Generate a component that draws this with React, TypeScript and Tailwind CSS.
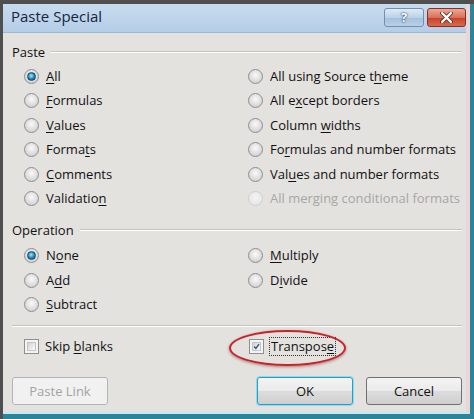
import React from "react";

type Label = [string, string, string];

const pasteLeft: { label: Label; checked?: boolean }[] = [
  { label: ["", "A", "ll"], checked: true },
  { label: ["", "F", "ormulas"] },
  { label: ["", "V", "alues"] },
  { label: ["Forma", "t", "s"] },
  { label: ["", "C", "omments"] },
  { label: ["Validatio", "n", ""] },
];

const pasteRight: { label: Label; disabled?: boolean }[] = [
  { label: ["All using Source t", "h", "eme"] },
  { label: ["All e", "x", "cept borders"] },
  { label: ["Column ", "w", "idths"] },
  { label: ["Fo", "r", "mulas and number formats"] },
  { label: ["Val", "u", "es and number formats"] },
  { label: ["All merging conditional formats", "", ""], disabled: true },
];

const opLeft: { label: Label; checked?: boolean }[] = [
  { label: ["N", "o", "ne"], checked: true },
  { label: ["A", "d", "d"] },
  { label: ["", "S", "ubtract"] },
];

const opRight: { label: Label }[] = [
  { label: ["", "M", "ultiply"] },
  { label: ["D", "i", "vide"] },
];

function Text({ label }: { label: Label }) {
  return (
    <span>
      {label[0]}
      {label[1] && <span className="underline underline-offset-2">{label[1]}</span>}
      {label[2]}
    </span>
  );
}

function Radio({ checked, disabled }: { checked?: boolean; disabled?: boolean }) {
  return (
    <span
      className={`w-[15px] h-[15px] rounded-full border flex items-center justify-center shrink-0 ${
        disabled
          ? "border-[#cfcfcf] bg-[radial-gradient(circle_at_50%_40%,#f4f4f4,#e2e2e2)]"
          : "border-[#8e8f8f] bg-[radial-gradient(circle_at_50%_40%,#fafafa,#c6c6c6)]"
      }`}
    >
      {checked && (
        <span className="w-[9px] h-[9px] rounded-full border border-[#124a70] bg-[radial-gradient(circle_at_45%_40%,#a8e6fa,#1f86b8_55%,#0b3d62)]" />
      )}
    </span>
  );
}

function RadioRow({ label, checked, disabled }: { label: Label; checked?: boolean; disabled?: boolean }) {
  return (
    <div className={`h-[24.5px] flex items-center gap-[7px] ${disabled ? "text-[#a6a6a6]" : "text-[#111]"}`}>
      <Radio checked={checked} disabled={disabled} />
      <Text label={label} />
    </div>
  );
}

function Checkbox({ checked }: { checked?: boolean }) {
  return (
    <span className="w-[15px] h-[15px] border border-[#8f8f8f] bg-[#f4f4f4] p-[2px] shrink-0">
      <span className="block w-full h-full border border-[#c4c4c4] bg-[linear-gradient(135deg,#d3d3d3,#fbfbfb)]">
        {checked && (
          <svg viewBox="0 0 9 9" className="w-full h-full">
            <path d="M1.5 4.5 L3.7 7 L7.8 1.4" fill="none" stroke="#2b4f86" strokeWidth="1.7" />
          </svg>
        )}
      </span>
    </span>
  );
}

function GroupHeader({ title }: { title: string }) {
  return (
    <div className="h-[16px] flex items-center gap-[6px]">
      <span className="text-[#111]">{title}</span>
      <div className="flex-1 border-t border-b border-t-[#c6c3bf] border-b-white" />
    </div>
  );
}

const btn =
  "h-[28px] w-[96px] rounded-[3px] border flex items-center justify-center bg-[linear-gradient(#f3f3f3,#ebebeb_48%,#dcdcdc_52%,#cfcfcf)]";

export default function App() {
  return (
    <div
      className="w-[474px] h-[419px] bg-[#4f4f4f] pt-[4px] pl-[3px] flex flex-col text-[13px] leading-none"
      style={{ fontFamily: '"Open Sans", "Liberation Sans", sans-serif' }}
    >
      <div className="flex-1 flex flex-col border-r-[4px] border-b-[5px] border-[#2d8498]">
        <div className="flex-1 flex flex-col border-r-[4px] border-b-[2px] border-r-[#ead5d8] border-b-[#bfe9f4]">
          {/* title bar */}
          <div className="h-[29px] bg-[linear-gradient(#c8dcef,#b4cde6)] border-b border-[#9fb8d2] flex items-start pl-[8px] pt-[4px]">
            <span className="text-[15px] text-[#15263d] mt-[1px]">Paste Special</span>
            <div className="ml-auto flex gap-[3px]">
              <div className="w-[40px] h-[19px] rounded-[3px] border border-[#6f8fb3] bg-[linear-gradient(#dfeaf5,#bcd1e7_50%,#a6c0dc_51%,#b8cfe6)] flex items-center justify-center">
                <span className="text-[13px] font-bold text-white [text-shadow:0_0_2px_#1e3a5c,0_0_1px_#1e3a5c]">?</span>
              </div>
              <div className="w-[39px] h-[19px] rounded-[3px] border border-[#8b2e22] bg-[linear-gradient(#eba996,#d8715a_50%,#c8402a_51%,#d96a4c)] flex items-center justify-center">
                <svg viewBox="0 0 12 10" className="w-[13px] h-[11px]">
                  <path d="M2 1 L10 9 M10 1 L2 9" stroke="#5a1a10" strokeWidth="3.6" strokeLinecap="round" />
                  <path d="M2 1 L10 9 M10 1 L2 9" stroke="#ffffff" strokeWidth="2.2" strokeLinecap="round" />
                </svg>
              </div>
            </div>
          </div>

          {/* body */}
          <div className="flex-1 bg-[#e4e2df] pl-[9px] pr-[4px] pt-[11px] flex flex-col">
            <GroupHeader title="Paste" />
            <div className="mt-[4px] pl-[12px] grid grid-cols-[224px_1fr]">
              <div>
                {pasteLeft.map((r) => (
                  <RadioRow key={r.label.join("")} label={r.label} checked={r.checked} />
                ))}
              </div>
              <div>
                {pasteRight.map((r) => (
                  <RadioRow key={r.label.join("")} label={r.label} disabled={r.disabled} />
                ))}
              </div>
            </div>

            <div className="mt-[11px]">
              <GroupHeader title="Operation" />
            </div>
            <div className="mt-[5.5px] pl-[12px] grid grid-cols-[224px_1fr]">
              <div>
                {opLeft.map((r) => (
                  <RadioRow key={r.label.join("")} label={r.label} checked={r.checked} />
                ))}
              </div>
              <div>
                {opRight.map((r) => (
                  <RadioRow key={r.label.join("")} label={r.label} />
                ))}
              </div>
            </div>

            <div className="mt-[8px] border-t border-b border-t-[#c6c3bf] border-b-white" />

            <div className="mt-[7.5px] h-[24px] pl-[12px] grid grid-cols-[224px_1fr] text-[#111]">
              <div className="flex items-center gap-[6px]">
                <Checkbox />
                <span>
                  Skip <span className="underline underline-offset-2">b</span>lanks
                </span>
              </div>
              <div className="relative flex items-center gap-[5px] pl-[1px]">
                <Checkbox checked />
                <span className="border border-dotted border-[#333] px-[1px] py-[2px]">
                  Transpos<span className="underline underline-offset-2">e</span>
                </span>
                <div className="absolute left-[-19px] top-[-5px] w-[117px] h-[36px] rounded-[50%] border-2 border-[#c8232b] shadow-[0_1px_3px_rgba(90,0,0,0.45)]" />
              </div>
            </div>

            <div className="mt-[18.5px] flex items-center">
              <div className={`${btn} border-[#b1b4b6] bg-none bg-[#f1f1f1] text-[#a3a3a3]`}>Paste Link</div>
              <div className={`${btn} ml-auto w-[95px] border-[#2f9cc4] shadow-[0_0_0_1px_#8adcf2] text-[#111]`}>OK</div>
              <div className={`${btn} ml-[13px] border-[#707070] text-[#111]`}>Cancel</div>
            </div>
          </div>
        </div>
      </div>
    </div>
  );
}
